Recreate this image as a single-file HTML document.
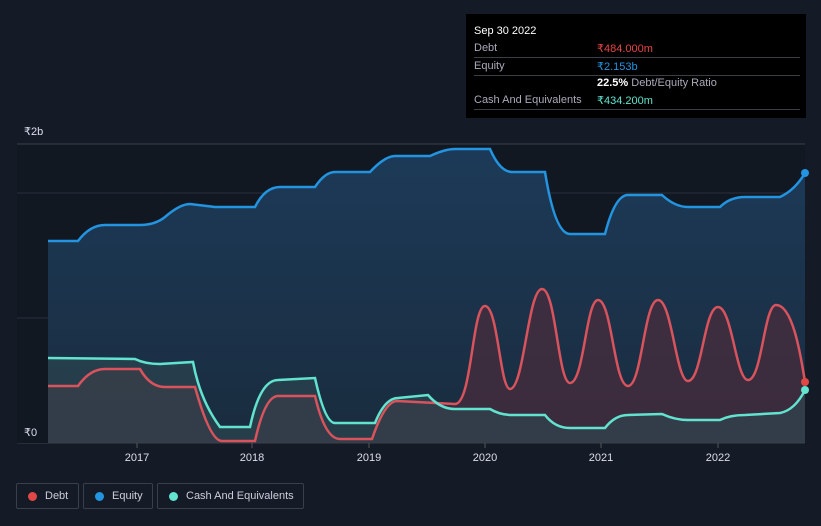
<!DOCTYPE html><html><head><style>
body{margin:0;background:#151b26;font-family:"Liberation Sans",sans-serif;}
.tt{position:absolute;left:466px;top:14px;width:340px;height:104px;background:#000;color:#fff;font-size:11px}
.tt div{position:absolute;left:8px;right:6px;border-bottom:1px solid #3a3f47;height:17px}
.l{color:#aab;position:absolute;left:0;top:2px}.v{position:absolute;left:123px;top:2px}
.leg{position:absolute;top:483px;height:26px;border:1px solid #3a404b;border-radius:2px;color:#ccd;font-size:11px;box-sizing:border-box}
.leg i{position:absolute;left:11px;top:8px;width:9px;height:9px;border-radius:50%}
.leg span{position:absolute;left:28px;top:6px}
</style></head><body>
<svg width="821" height="526" style="position:absolute;left:0;top:0">
<defs><linearGradient id="g" x1="0" y1="0" x2="0" y2="1"><stop offset="0" stop-color="#1c3a58"/><stop offset="1" stop-color="#1a2c3e"/></linearGradient></defs>
<rect x="17" y="144" width="788" height="299" fill="#111822"/>
<line x1="17" y1="144" x2="805" y2="144" stroke="#3a404b"/>
<line x1="17" y1="193" x2="805" y2="193" stroke="#2a313c"/>
<line x1="17" y1="318" x2="805" y2="318" stroke="#2a313c"/>
<path d="M48,241 L78,241 Q90,225 105,225 L140,225 Q155,225 165,217 Q180,204 190,204 L215,207 L255,207 Q265,187 280,187 L315,187 Q325,172 335,172 L370,172 Q385,156 395,156 L430,156 Q445,149 455,149 L490,149 Q500,172 512,172 L545,172 Q555,234 570,234 L605,234 Q615,195 628,195 L662,195 Q675,207 688,207 L720,207 Q730,197 745,197 L780,197 Q795,190 805,173 L805,443 L48,443Z" fill="url(#g)"/>
<path id="dp" d="M48,386 L78,386 Q90,369 105,369 L140,369 Q150,387 165,387 L195,387 Q210,441 222,441 L255,441 Q265,396 278,396 L315,396 Q325,439 340,439 L372,439 Q385,401 397,401 L455,404 C472,404 472,306 485,306 C498,306 500,389 510,389 C524,389 528,289 542,289 C556,289 558,383 570,383 C584,383 586,300 598,300 C612,300 614,386 628,386 C642,386 644,300 658,300 C672,300 676,381 688,381 C702,381 704,307 718,307 C732,307 736,380 748,380 C762,380 764,305 776,305 C792,305 800,350 805,382 L805,443 L48,443Z" fill="#4a2c3c" opacity="0.7"/>
<path d="M48,358 L135,359 Q145,364 160,364 L193,362 Q200,400 220,427 L250,427 Q260,380 278,380 L315,378 Q325,423 335,423 L375,423 Q385,398 398,398 L428,395 Q440,409 455,409 L490,409 Q500,415 512,415 L545,415 Q555,428 570,428 L605,428 Q615,415 628,415 L662,414 Q675,420 688,420 L720,420 Q730,415 745,415 L780,413 Q795,410 805,390 L805,443 L48,443Z" fill="#2e4a52" opacity="0.6"/>
<path d="M48,241 L78,241 Q90,225 105,225 L140,225 Q155,225 165,217 Q180,204 190,204 L215,207 L255,207 Q265,187 280,187 L315,187 Q325,172 335,172 L370,172 Q385,156 395,156 L430,156 Q445,149 455,149 L490,149 Q500,172 512,172 L545,172 Q555,234 570,234 L605,234 Q615,195 628,195 L662,195 Q675,207 688,207 L720,207 Q730,197 745,197 L780,197 Q795,190 805,173" fill="none" stroke="#2394e0" stroke-width="2.5"/>
<path d="M48,386 L78,386 Q90,369 105,369 L140,369 Q150,387 165,387 L195,387 Q210,441 222,441 L255,441 Q265,396 278,396 L315,396 Q325,439 340,439 L372,439 Q385,401 397,401 L455,404 C472,404 472,306 485,306 C498,306 500,389 510,389 C524,389 528,289 542,289 C556,289 558,383 570,383 C584,383 586,300 598,300 C612,300 614,386 628,386 C642,386 644,300 658,300 C672,300 676,381 688,381 C702,381 704,307 718,307 C732,307 736,380 748,380 C762,380 764,305 776,305 C792,305 800,350 805,382" fill="none" stroke="#d9535d" stroke-width="2.5"/>
<path d="M48,358 L135,359 Q145,364 160,364 L193,362 Q200,400 220,427 L250,427 Q260,380 278,380 L315,378 Q325,423 335,423 L375,423 Q385,398 398,398 L428,395 Q440,409 455,409 L490,409 Q500,415 512,415 L545,415 Q555,428 570,428 L605,428 Q615,415 628,415 L662,414 Q675,420 688,420 L720,420 Q730,415 745,415 L780,413 Q795,410 805,390" fill="none" stroke="#62e3cf" stroke-width="2.5"/>
<circle cx="805" cy="173" r="4" fill="#2394e0"/><circle cx="805" cy="382" r="4" fill="#e04848"/><circle cx="805" cy="390" r="4" fill="#62e3cf"/>
<line x1="17" y1="443" x2="805" y2="443" stroke="#3a404b"/>
<g stroke="#555" ><line x1="137" y1="443" x2="137" y2="448"/><line x1="252" y1="443" x2="252" y2="448"/><line x1="369" y1="443" x2="369" y2="448"/><line x1="485" y1="443" x2="485" y2="448"/><line x1="601" y1="443" x2="601" y2="448"/><line x1="718" y1="443" x2="718" y2="448"/></g>
<g fill="#dde" font-size="11" text-anchor="middle"><text x="137" y="461">2017</text><text x="252" y="461">2018</text><text x="369" y="461">2019</text><text x="485" y="461">2020</text><text x="601" y="461">2021</text><text x="718" y="461">2022</text></g>
<text x="24" y="135" fill="#dde" font-size="11">₹2b</text>
<rect x="17" y="423" width="31" height="20" fill="#111822"/>
<text x="24" y="436" fill="#dde" font-size="11">₹0</text>
</svg>
<div class="tt">
<span style="position:absolute;left:8px;top:11px;font-size:11px">Sep 30 2022</span>
<div style="top:26px"><span class="l">Debt</span><span class="v" style="color:#e84545">₹484.000m</span></div>
<div style="top:44px"><span class="l">Equity</span><span class="v" style="color:#2394e0">₹2.153b</span></div>
<div style="top:61px;border:none"><span class="v"><b>22.5%</b> <span style="color:#aab">Debt/Equity Ratio</span></span></div>
<div style="top:78px"><span class="l">Cash And Equivalents</span><span class="v" style="color:#62e3cf">₹434.200m</span></div>
</div>
<div class="leg" style="left:16px;width:63px"><i style="background:#e04848"></i><span>Debt</span></div>
<div class="leg" style="left:83px;width:70px"><i style="background:#2394e0"></i><span>Equity</span></div>
<div class="leg" style="left:157px;width:147px"><i style="background:#62e3cf"></i><span>Cash And Equivalents</span></div>
</body></html>
